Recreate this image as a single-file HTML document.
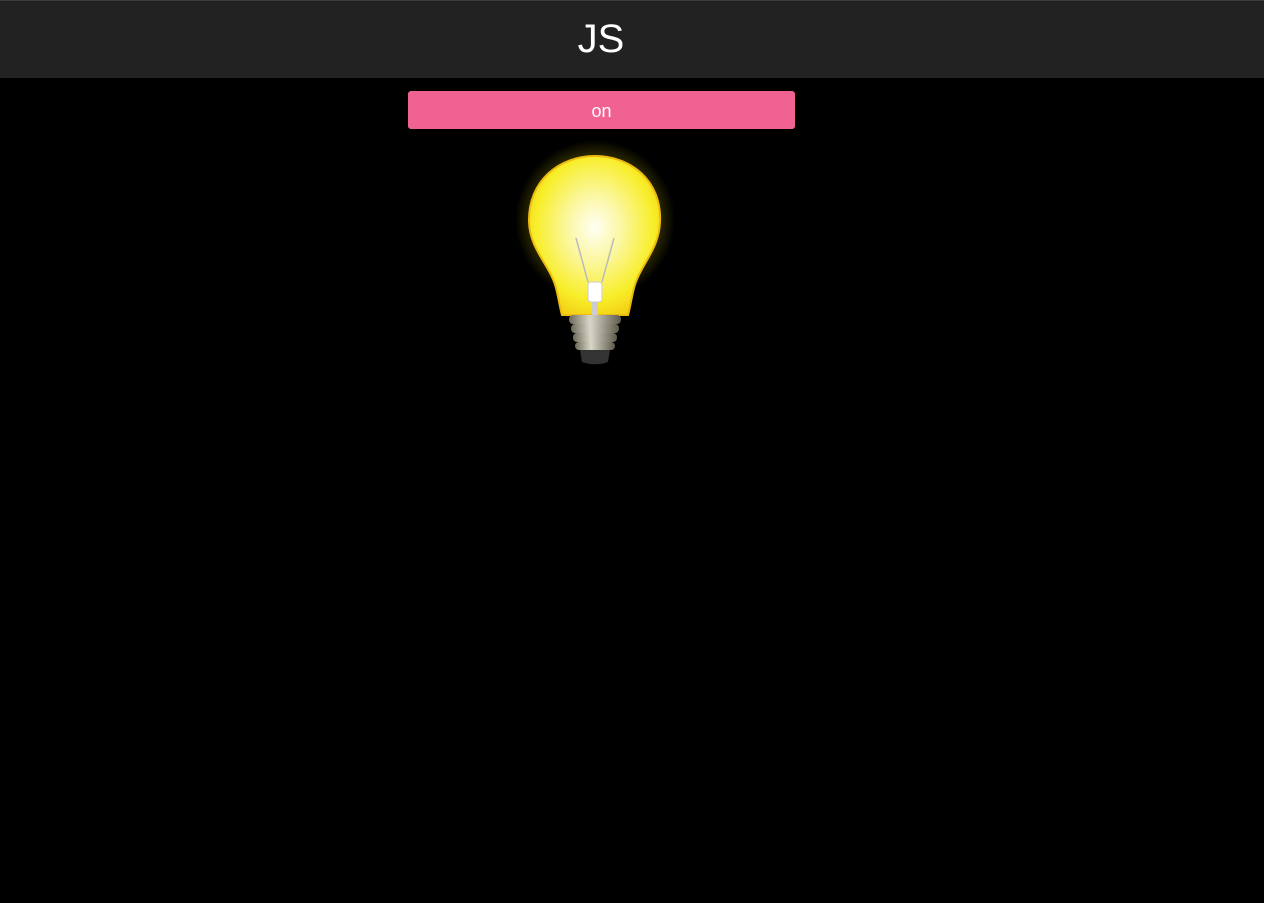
<!DOCTYPE html>
<html><head><meta charset="utf-8"><style>
html,body{margin:0;padding:0;background:#000;width:1264px;height:903px;overflow:hidden;font-family:"Liberation Sans",sans-serif}
.hdr{position:absolute;left:0;top:0;width:1264px;height:78px;background:#222;border-top:1px solid #3c3c3c;box-sizing:border-box}
.hdr span{position:absolute;left:0;width:1202px;text-align:center;top:16px;font-size:40px;color:#fff;font-weight:300}
.btn{position:absolute;left:408px;top:91px;width:387px;height:38px;background:#f06292;border-radius:3px;color:#fff;font-size:18px;text-align:center;line-height:40px}
svg{position:absolute;left:500px;top:140px}
</style></head><body>
<div class="hdr"><span>JS</span></div>
<div class="btn">on</div>
<svg width="200" height="240" viewBox="0 0 200 240">
<defs>
<radialGradient id="g" cx="0.5" cy="0.45" r="0.6">
<stop offset="0" stop-color="#fffff5"/><stop offset="0.35" stop-color="#fbf7a0"/><stop offset="0.75" stop-color="#f8ee2a"/><stop offset="1" stop-color="#f2cc10"/>
</radialGradient>
<radialGradient id="glow" cx="0.5" cy="0.5" r="0.5">
<stop offset="0.6" stop-color="#fff200" stop-opacity="0.35"/><stop offset="1" stop-color="#fff200" stop-opacity="0"/>
</radialGradient>
<linearGradient id="m" x1="0" x2="1"><stop offset="0" stop-color="#6d6a58"/><stop offset="0.4" stop-color="#d8d6c8"/><stop offset="1" stop-color="#5e5b4c"/></linearGradient>
</defs>
<ellipse cx="95" cy="80" rx="80" ry="80" fill="url(#glow)"/>
<path d="M95 16 C130 16 162 40 160 82 C159 110 140 125 134 148 C131 160 130 168 128 175 L62 175 C60 168 59 160 56 148 C50 125 30 110 29 82 C28 40 60 16 95 16Z" fill="url(#g)" stroke="#eebb10" stroke-width="2"/>
<path d="M76 98 L88 142 M114 98 L102 142" stroke="#bbb" stroke-width="1.5" fill="none"/>
<rect x="88" y="142" width="14" height="20" rx="3" fill="#fff" stroke="#ccc"/>
<rect x="92" y="162" width="6" height="15" fill="#ccc"/>
<rect x="69" y="175" width="52" height="9" rx="4" fill="url(#m)"/>
<rect x="71" y="184" width="48" height="9" rx="4" fill="url(#m)"/>
<rect x="73" y="193" width="44" height="9" rx="4" fill="url(#m)"/>
<rect x="75" y="202" width="40" height="8" rx="4" fill="url(#m)"/>
<path d="M80 210 L110 210 L108 222 C100 225 90 225 82 222Z" fill="#333"/>
</svg>
</body></html>
